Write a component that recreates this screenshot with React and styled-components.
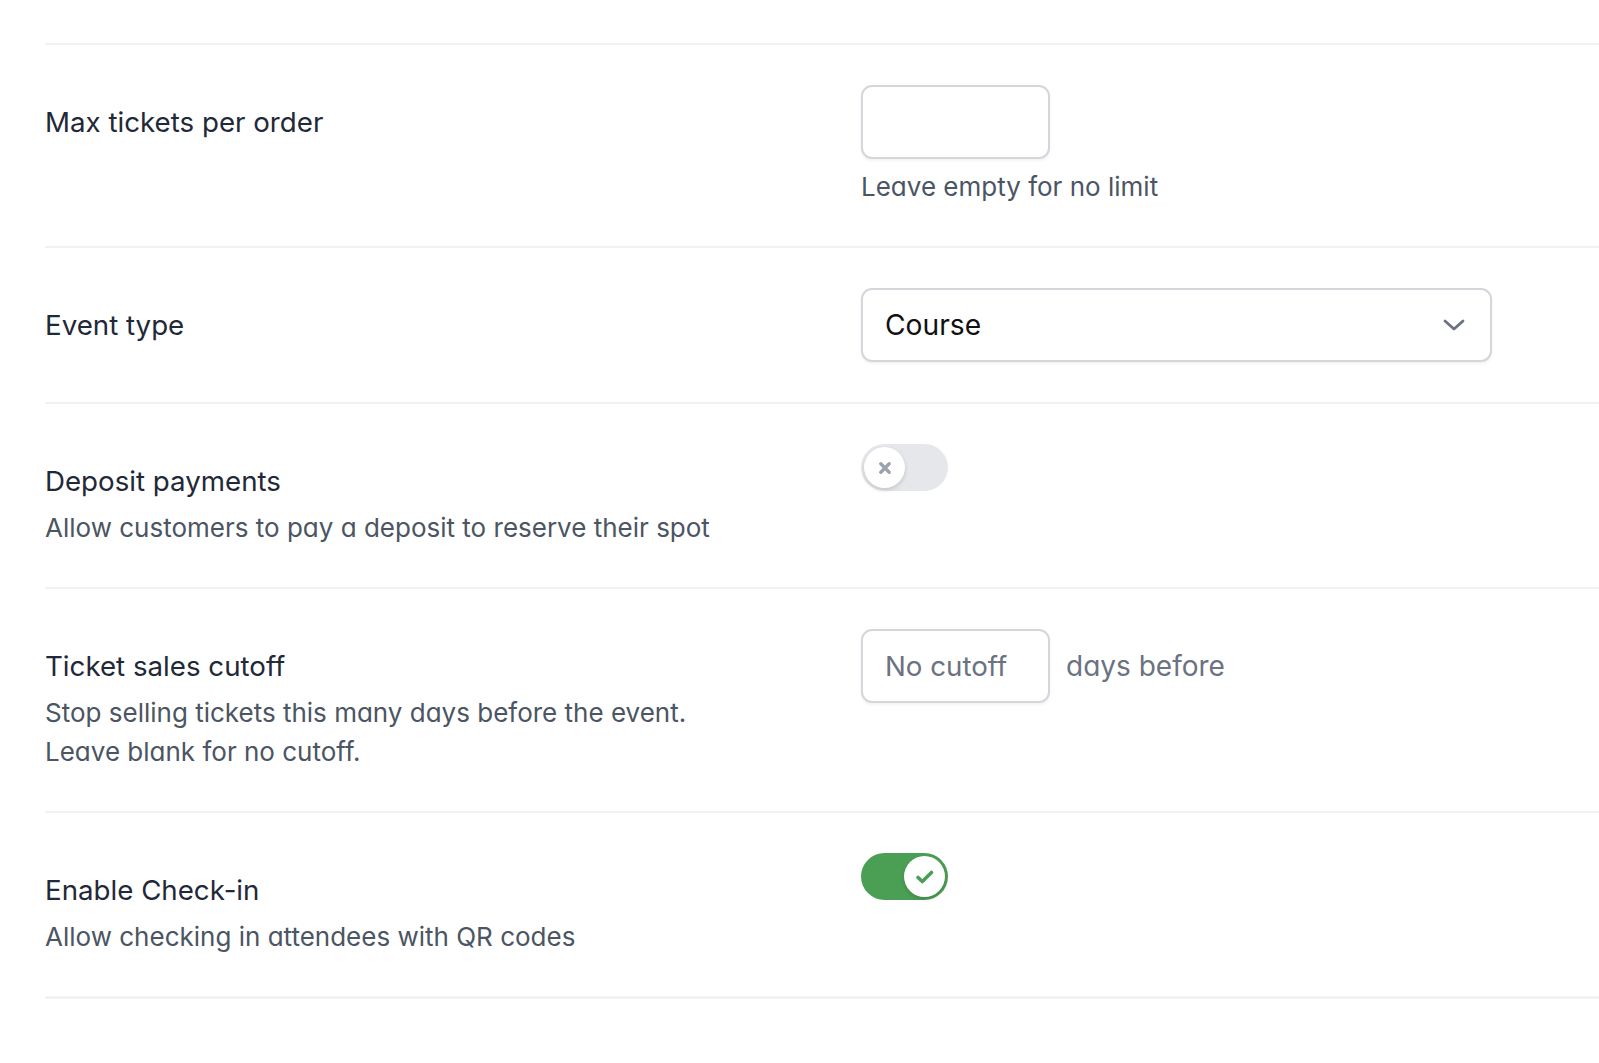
import React from "react";
import styled, { createGlobalStyle } from "styled-components";

const Global = createGlobalStyle`
  html, body { margin: 0; padding: 0; background: #ffffff; overflow: hidden; }
  body { font-family: Inter, "Noto Sans", sans-serif; -webkit-font-smoothing: antialiased; }
  * { box-sizing: border-box; }
`;

const Page = styled.div`
  padding: 43px 0 0 45px;
  width: 100vw;
  height: 100vh;
`;

const Settings = styled.div`
  border-top: 2px solid #f1f2f4;
  border-bottom: 3px solid #f1f2f4;
`;

const Row = styled.div`
  display: grid;
  grid-template-columns: 816px 1fr;
  align-items: start;
  padding: 40px 0;
  border-top: ${(p) => (p.$first ? "none" : "2px solid #f1f2f4")};
`;

const LabelCol = styled.div`
  padding-top: 16px;
  display: flex;
  flex-direction: column;
`;

const Label = styled.div`
  font-size: 27.7px;
  line-height: 42px;
  color: #1f2937;
  font-weight: 400;
`;

const Desc = styled.div`
  margin-top: 6px;
  font-size: 26px;
  line-height: 39px;
  color: #4b5563;
  font-feature-settings: "cv11";
  max-width: 720px;
`;

const ControlCol = styled.div`
  display: flex;
  flex-direction: column;
  align-items: flex-start;
`;

const Inline = styled.div`
  display: flex;
  align-items: center;
  gap: 16px;
`;

const Input = styled.input`
  width: 189px;
  height: 74px;
  border: 2px solid #d4d6db;
  border-radius: 11px;
  padding: 0 22px;
  font-family: inherit;
  font-size: 27.7px;
  color: #111827;
  background: #fff;
  box-shadow: 0 2px 3px rgba(0, 0, 0, 0.05);
  outline: none;
  &::placeholder { color: #6b7280; }
`;

const Helper = styled.div`
  margin-top: 8px;
  font-size: 26px;
  line-height: 39px;
  color: #4b5563;
  font-feature-settings: "cv11";
`;

const Suffix = styled.span`
  font-size: 28px;
  color: #6b7280;
  font-feature-settings: "cv11";
`;

const Select = styled.div`
  width: 631px;
  height: 74px;
  border: 2px solid #d4d6db;
  border-radius: 11px;
  padding: 0 24px 0 22px;
  display: flex;
  align-items: center;
  justify-content: space-between;
  font-size: 28.2px;
  color: #111111;
  background: #fff;
  box-shadow: 0 2px 3px rgba(0, 0, 0, 0.05);
`;

const Track = styled.div`
  width: 87px;
  height: 47px;
  border-radius: 999px;
  background: ${(p) => (p.$on ? "#4b9f54" : "#e5e7eb")};
  padding: 3px;
  display: flex;
  justify-content: ${(p) => (p.$on ? "flex-end" : "flex-start")};
`;

const Knob = styled.div`
  width: 41px;
  height: 41px;
  border-radius: 50%;
  background: #fff;
  box-shadow: 0 2px 4px rgba(0, 0, 0, 0.15);
  display: flex;
  align-items: center;
  justify-content: center;
`;

function Toggle({ on }) {
  return (
    <Track $on={on}>
      <Knob>
        {on ? (
          <svg width="24" height="24" viewBox="0 0 24 24">
            <path d="M5 12.5l4.3 4L18.5 7.5" fill="none" stroke="#4b9f54" strokeWidth="3.6" strokeLinecap="round" strokeLinejoin="round" />
          </svg>
        ) : (
          <svg width="16" height="16" viewBox="0 0 16 16">
            <path d="M3.8 3.8l8.4 8.4M12.2 3.8l-8.4 8.4" fill="none" stroke="#9ca3af" strokeWidth="3.4" strokeLinecap="round" />
          </svg>
        )}
      </Knob>
    </Track>
  );
}

function Chevron() {
  return (
    <svg width="24" height="24" viewBox="0 0 24 24">
      <path d="M3 8l9 8 9-8" fill="none" stroke="#6b7280" strokeWidth="2.8" strokeLinecap="round" strokeLinejoin="round" />
    </svg>
  );
}

export default function App() {
  return (
    <>
      <Global />
      <Page>
        <Settings>
          <Row $first>
            <LabelCol>
              <Label>Max tickets per order</Label>
            </LabelCol>
            <ControlCol>
              <Input type="text" />
              <Helper>Leave empty for no limit</Helper>
            </ControlCol>
          </Row>
          <Row>
            <LabelCol>
              <Label>Event type</Label>
            </LabelCol>
            <ControlCol>
              <Select>
                <span>Course</span>
                <Chevron />
              </Select>
            </ControlCol>
          </Row>
          <Row>
            <LabelCol>
              <Label>Deposit payments</Label>
              <Desc>Allow customers to pay a deposit to reserve their spot</Desc>
            </LabelCol>
            <ControlCol>
              <Toggle on={false} />
            </ControlCol>
          </Row>
          <Row>
            <LabelCol>
              <Label>Ticket sales cutoff</Label>
              <Desc>
                Stop selling tickets this many days before the event.
                <br />
                Leave blank for no cutoff.
              </Desc>
            </LabelCol>
            <ControlCol>
              <Inline>
                <Input type="text" placeholder="No cutoff" />
                <Suffix>days before</Suffix>
              </Inline>
            </ControlCol>
          </Row>
          <Row>
            <LabelCol>
              <Label>Enable Check-in</Label>
              <Desc>Allow checking in attendees with QR codes</Desc>
            </LabelCol>
            <ControlCol>
              <Toggle on={true} />
            </ControlCol>
          </Row>
        </Settings>
      </Page>
    </>
  );
}
